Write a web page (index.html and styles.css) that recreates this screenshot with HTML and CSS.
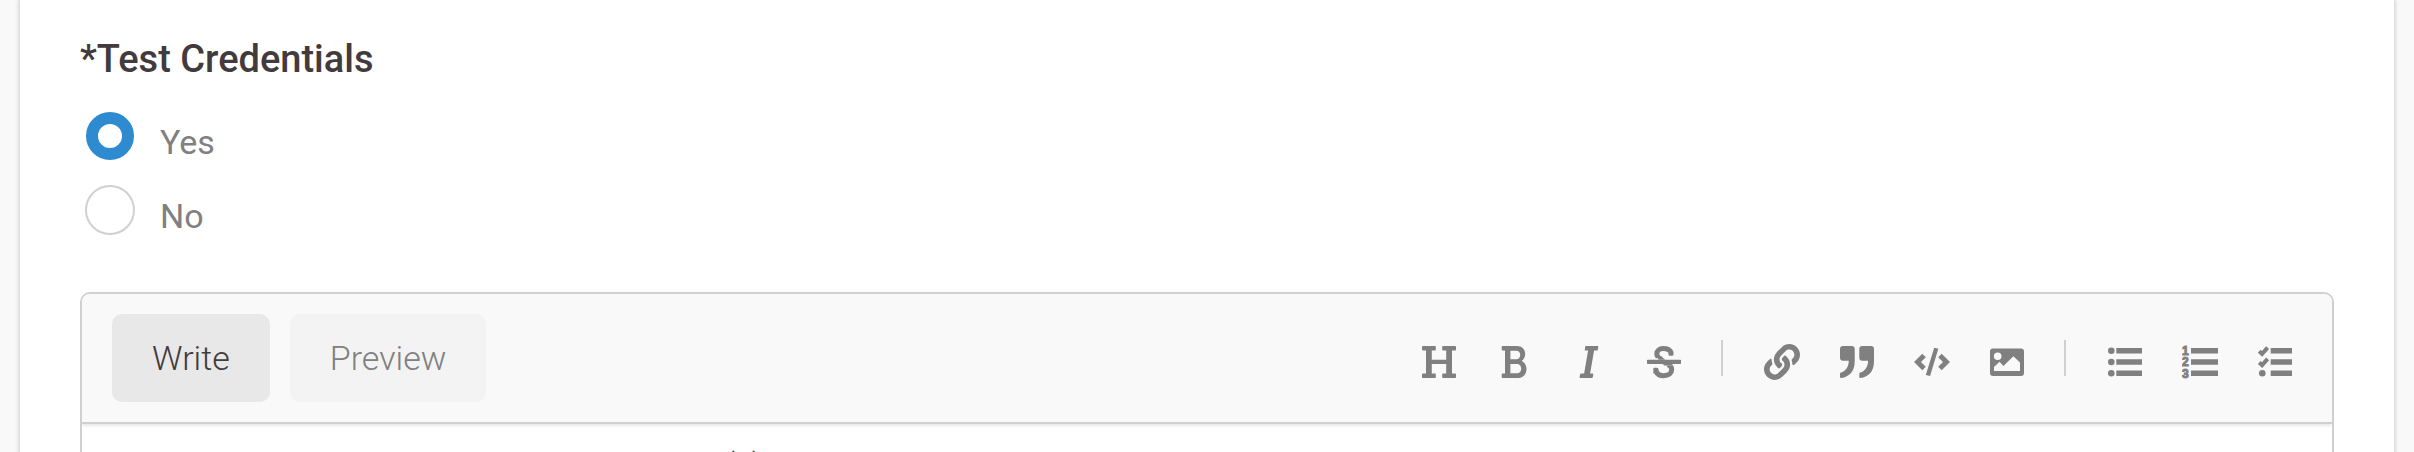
FILE: index.html
```html
<!DOCTYPE html>
<html lang="en">
<head>
<meta charset="utf-8">
<title>Test Credentials</title>
<link rel="stylesheet" href="styles.css">
</head>
<body>
<main class="card">
  <fieldset class="question">
    <legend class="question-title">*Test Credentials</legend>
    <label class="option"><input class="radio" type="radio" name="credentials" checked><span class="option-label">Yes</span></label>
    <label class="option"><input class="radio" type="radio" name="credentials"><span class="option-label">No</span></label>
  </fieldset>
  <section class="editor">
    <header class="editor-header">
      <div class="tabs">
        <button class="tab tab-active" type="button">Write</button>
        <button class="tab" type="button">Preview</button>
      </div>
      <div class="toolbar">
        <button class="tool" type="button" aria-label="Heading"><svg class="icon" viewBox="0 0 36 36"><path d="M2 2h12q.8 0 .8.8v3q0 .8-.8.8h-3.2v9.1h14.4V6.6H22q-.8 0-.8-.8v-3q0-.8.8-.8h12q1 0 1 .8v3q0 .8-1 .8h-3v22.8h3q1 0 1 .8v3q0 .8-1 .8H22q-.8 0-.8-.8v-3q0-.8.8-.8h3.2V20H10.800v9.400H14q.8 0 .8.8v3q0 .8-.8.8H2q-1 0-1-.8v-3q0-.8 1-.8h3V6.600H2q-1 0-1-.8v-3Q1 2 2 2z"/></svg></button>
        <button class="tool" type="button" aria-label="Bold"><svg class="icon" viewBox="0 0 36 36"><path fill-rule="evenodd" d="M6.500 2H21c5 0 8.200 3.400 8.200 8 0 3-1.400 5.600-3.600 7.100 3 1.400 4.900 4.400 4.900 7.900 0 5.400-3.800 9-9 9h-15q-.8 0-.8-.8v-3q0-.8.8-.8H9V6.600H6.500q-.8 0-.8-.8v-3q0-.8.8-.8zM14.400 6.700v8.600h6c2.200 0 3.800-1.900 3.800-4.300s-1.500-4.300-3.800-4.300zM14.400 20v9.300H21c2.500 0 4.200-2 4.200-4.600S23.400 20 21 20z"/></svg></button>
        <button class="tool" type="button" aria-label="Italic"><svg class="icon" viewBox="0 0 36 36"><path d="M15 2h11.600q.9 0 .7.900l-.6 3q-.1.700-.9.700h-2.700l-4 22.800h2.400q1 0 .8.900l-.5 2.900q-.2.800-1 .8H9.300q-.9 0-.7-.9l.6-3q.1-.7.900-.7h3l4-22.800h-2.600q-.9 0-.7-.9l.4-2.900q.1-.8.800-.8z"/></svg></button>
        <button class="tool" type="button" aria-label="Strikethrough"><svg class="icon" viewBox="0 0 36 36"><path class="stroke" d="M25.300 8.500C22.500 3.500 10.800 2.600 10.800 10c0 3 2 4.300 5 5.400M10.200 28c3 5.500 15.500 4.800 15.500-2.500 0-2.600-1.300-4.200-4-5.200"/><path d="M22.500 8.500l5-1v3q0 1.300-1.300 1.300h-2.400q-1.300 0-1.300-1.300zM7.300 25.200q0-1.400 1.300-1.400h2.300q1.300 0 1.500 1.300l.6 3.200-5.700 1.200z"/><rect x="0" y="14.200" width="36" height="7.200" class="knockout"/><path d="M12.500 15.700h7L14.900 12.500l-3 1.200zM16.500 20l2 1.400h8.800L26 20z"/><rect x="1" y="15.700" width="34" height="4.400" rx=".8"/></svg></button>
        <span class="divider"></span>
        <button class="tool" type="button" aria-label="Link"><svg class="icon" viewBox="0 0 512 512"><path d="M326.612 185.391c59.747 59.809 58.927 155.698.36 214.590-.11.12-.24.25-.36.37l-67.200 67.200c-59.270 59.270-155.699 59.262-214.960 0-59.270-59.260-59.270-155.700 0-214.960l37.106-37.106c9.840-9.840 26.786-3.300 27.294 10.606.648 17.722 3.826 35.527 9.690 52.721 1.986 5.822.567 12.262-3.783 16.612l-13.087 13.087c-28.026 28.026-28.905 73.660-1.155 101.960 28.024 28.579 74.086 28.749 102.325.51l67.200-67.190c28.191-28.191 28.073-73.757 0-101.830-3.701-3.694-7.429-6.564-10.341-8.569a16.037 16.037 0 0 1-6.947-12.606c-.396-10.567 3.348-21.456 11.698-29.806l21.054-21.055c5.521-5.521 14.182-6.199 20.584-1.731a152.482 152.482 0 0 1 20.522 17.197zM467.547 44.449c-59.261-59.262-155.690-59.270-214.960 0l-67.200 67.200c-.12.12-.25.25-.36.37-58.566 58.892-59.387 154.781.36 214.590a152.454 152.454 0 0 0 20.521 17.196c6.402 4.468 15.064 3.789 20.584-1.731l21.054-21.055c8.350-8.350 12.094-19.239 11.698-29.806a16.037 16.037 0 0 0-6.947-12.606c-2.912-2.005-6.640-4.875-10.341-8.569-28.073-28.073-28.191-73.639 0-101.830l67.200-67.190c28.239-28.239 74.300-28.069 102.325.51 27.750 28.300 26.872 73.934-1.155 101.960l-13.087 13.087c-4.350 4.350-5.769 10.790-3.783 16.612 5.864 17.194 9.042 34.999 9.690 52.721.509 13.906 17.454 20.446 27.294 10.606l37.106-37.106c59.271-59.259 59.271-155.699.001-214.959z"/></svg></button>
        <button class="tool" type="button" aria-label="Quote"><svg class="icon" viewBox="0 0 36 36"><path id="comma" d="M4 2h8.700q3 0 3 3v12.500C15.700 27 10.500 33 2.200 34q-1.200.1-1.200-1v-3.300q0-.9.9-1.100C6.800 27.200 9.600 23 9.800 16.800H4q-3 0-3-3V5q0-3 3-3z"/><use href="#comma" x="19.300"/></svg></button>
        <button class="tool" type="button" aria-label="Code"><svg class="icon" viewBox="0 0 36 36"><path d="M8.300 9.700l3.500 3.500L7 18l4.800 4.800-3.500 3.500L0 18zM27.700 9.700l-3.500 3.500L29 18l-4.800 4.800 3.500 3.500L36 18zM20.200 3.700l4.100 1-8.200 27.400-4.300-1.100z"/></svg></button>
        <button class="tool" type="button" aria-label="Image"><svg class="icon" viewBox="0 0 36 36"><path fill-rule="evenodd" d="M4 4.400h28q3 0 3 3V29q0 3-3 3H4q-3 0-3-3V7.400q0-3 3-3zM8.700 8.500a3.800 3.800 0 1 0 0 7.600 3.800 3.800 0 1 0 0-7.600zM5 27.100h26v-8.600l-6.600-6.200-10 9.600-3.800-4.100L5 23z"/></svg></button>
        <span class="divider"></span>
        <button class="tool" type="button" aria-label="Bulleted list"><svg class="icon" viewBox="0 0 36 36"><circle cx="4.300" cy="6.700" r="3.300"/><circle cx="4.300" cy="18" r="3.300"/><circle cx="4.300" cy="29.300" r="3.300"/><path d="M9.300 4h25.700v5.400H9.300zM9.300 15.300h25.700v5.400H9.300zM9.300 26.600h25.700V32H9.300z"/></svg></button>
        <button class="tool" type="button" aria-label="Numbered list"><svg class="icon" viewBox="0 0 36 36"><text class="digit" x="0" y="11">1</text><text class="digit" x="0" y="22">2</text><text class="digit" x="0" y="34">3</text><path d="M9 4h27v5.400H9zM9 15.300h27v5.400H9zM9 26.600h27V32H9z"/></svg></button>
        <button class="tool" type="button" aria-label="Task list"><svg class="icon" viewBox="0 0 36 36"><path class="check" d="M2.200 7.200l2.900 2.600 5.500-6.200M2.200 18.500l2.900 2.600 5.500-6.200"/><circle cx="5.300" cy="29.300" r="3.300"/><path d="M13.700 4H35v5.400H13.700zM13.700 15.300H35v5.400H13.700zM13.700 26.600H35V32H13.700z"/></svg></button>
      </div>
    </header>
    <textarea class="editor-text" rows="6" aria-label="Details">(s)</textarea>
  </section>
</main>
</body>
</html>
```
FILE: styles.css
```css
* { box-sizing: border-box; }

body {
  margin: 0;
  padding: 0 20px;
  background: #f9f9f9;
  color: #423a3d;
  font-family: Roboto, "Liberation Sans", sans-serif;
  overflow: hidden;
}

.card {
  padding: 34px 60px 60px;
  background: #fff;
  box-shadow: 0 0 4px 1px #ccc;
}

.question {
  margin: 0;
  padding: 0;
  border: 0;
}

.question-title {
  padding: 0;
  margin-bottom: 24px;
  font-size: 38px;
  font-weight: 500;
  line-height: 50px;
}

.option {
  display: flex;
  gap: 25px;
  height: 74px;
  padding: 3px 5px 0;
  color: #808080;
  font-size: 34px;
  line-height: 62px;
}

.radio {
  appearance: none;
  width: 50px;
  height: 50px;
  margin: 0;
  border: 2px solid #d0d0d0;
  border-radius: 50%;
  background: #fff;
}

.radio:checked {
  width: 48px;
  height: 48px;
  margin: 1px;
  border: 12px solid #2f8bcf;
}

.editor {
  margin-top: 36px;
  border: 2px solid #d0d0d0;
  border-radius: 10px;
  overflow: hidden;
}

.editor-header {
  position: relative;
  display: flex;
  align-items: center;
  justify-content: space-between;
  padding: 20px 39px 20px 30px;
  border-bottom: 2px solid #d0d0d0;
  background: #f9f9f9;
  box-shadow: 0 1px 4px #ddd;
}

.tabs {
  display: flex;
  gap: 20px;
}

.tab {
  padding: 0 40px;
  border: 0;
  border-radius: 10px;
  background: #f3f3f3;
  color: #808080;
  font-family: inherit;
  font-size: 34px;
  font-weight: 300;
  line-height: 88px;
}

.tab-active {
  background: #e8e8e8;
  color: #423a3d;
}

.toolbar {
  display: flex;
  align-items: flex-start;
  gap: 39px;
  padding-top: 4px;
}

.tool {
  padding: 4px 0 0;
  border: 0;
  background: none;
  color: #808080;
}

.icon {
  display: block;
  width: 36px;
  height: 36px;
  fill: currentColor;
}

.stroke {
  fill: none;
  stroke: currentColor;
  stroke-width: 5;
}

.check {
  fill: none;
  stroke: currentColor;
  stroke-width: 4;
}

.knockout { fill: #f9f9f9; }

.digit {
  font: bold 12px "Liberation Sans", sans-serif;
  stroke: currentColor;
  stroke-width: 1px;
}

.divider {
  width: 2px;
  height: 36px;
  margin-right: 2px;
  background: #d0d0d0;
}

.editor-text {
  display: block;
  width: 100%;
  padding: 19px 30px 22px 642px;
  border: 0;
  resize: none;
  color: #423a3d;
  font: 300 34px/44px Roboto, sans-serif;
}
```
